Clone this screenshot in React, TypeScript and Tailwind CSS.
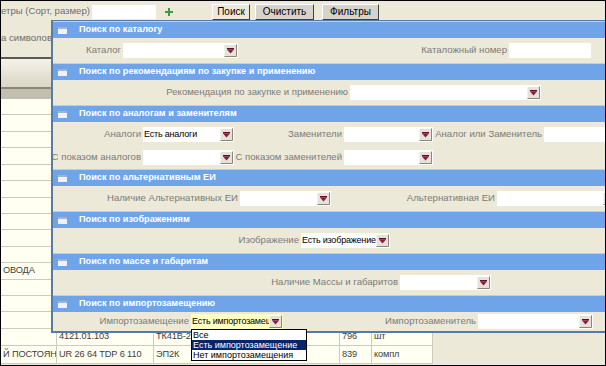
import type { ReactNode } from "react";

const FONT = "font-['Liberation_Sans',Arial,sans-serif]";

function Arrow() {
  return (
    <svg width="13" height="13" viewBox="0 0 13 13" className="shrink-0">
      <rect x="0" y="0" width="13" height="13" fill="#e6e2d8" />
      <path d="M0 12.5V0.5H12.5" stroke="#ffffff" fill="none" />
      <path d="M0.5 12.5H12.5V0.5" stroke="#8a8780" fill="none" />
      <rect x="3" y="4" width="7" height="1.5" fill="#5a1030" />
      <path d="M3 5.5H10L6.5 9.5Z" fill="#8a1c44" />
    </svg>
  );
}

function Select({ w, value, yellow }: { w: string; value?: string; yellow?: boolean }) {
  return (
    <div
      className={`${w} h-[15px] flex items-center shrink-0 pr-[1px] ${
        yellow ? "bg-[#ffffc4] font-medium" : "bg-white"
      }`}
    >
      <span className="flex-1 overflow-hidden whitespace-nowrap pl-[1px] text-[9px] tracking-[-0.2px] text-black leading-none">
        {value}
      </span>
      <Arrow />
    </div>
  );
}

function Input({ w }: { w: string }) {
  return <div className={`${w} h-[15px] bg-white shrink-0`} />;
}

function Label({ w, children }: { w: string; children: ReactNode }) {
  return (
    <div className={`${w} shrink-0 flex justify-end pr-[2px] whitespace-nowrap text-[#7b7b7b] text-[9.6px]`}>
      {children}
    </div>
  );
}

function Head({ title }: { title: string }) {
  return (
    <div className="h-[17px] bg-[#6fa5e8] border-t border-[#b4d0f2] flex items-center">
      <div className="ml-[5px] w-[9px] h-[7px] bg-[#eef2f8] border-t-2 border-[#9fb4d0]" />
      <span className="ml-[12px] text-white font-bold text-[9.2px] whitespace-nowrap">{title}</span>
    </div>
  );
}

const cols = ["w-[56px]", "w-[97px]", "w-[186px]", "w-[32px]", "w-[61px]"];

function Row({ h, cells }: { h: string; cells: string[] }) {
  return (
    <div className={`flex ${h}`}>
      {cols.map((c, i) => (
        <div
          key={i}
          className={`${c} border-r border-b border-[#cdcbbd] bg-[#fffff2] overflow-hidden whitespace-nowrap flex items-center px-[2px] text-[#3d3d3d] text-[9.2px] tracking-[-0.1px]`}
        >
          {cells[i] ?? ""}
        </div>
      ))}
    </div>
  );
}

export default function App() {
  const hidden = Array.from({ length: 14 }, (_, i) => (i === 10 ? ["ОВОДА"] : []));

  return (
    <div className={`relative w-[606px] h-[366px] overflow-hidden bg-[#ECE9D8] border border-black text-[9.6px] ${FONT}`}>
      {/* top bar */}
      <div className="h-[21px] flex items-center">
        <span className="w-[89px] shrink-0 text-[#6e6e6e] whitespace-nowrap overflow-hidden">етры (Сорт, размер)</span>
        <div className="ml-[2px] w-[64px] h-[14px] bg-white" />
        <svg width="10" height="10" viewBox="0 0 10 10" className="ml-[8px]">
          <path d="M5 1V9M1 5H9" stroke="#3c9a3c" strokeWidth="2" />
        </svg>
        <button className="ml-[38px] h-[16px] w-[38px] bg-[#ECE9D8] border border-t-white border-l-white border-r-[#404040] border-b-[#404040] text-black text-[10px] leading-none">
          Поиск
        </button>
        <button className="ml-[5px] h-[16px] w-[59px] bg-[#d6d3cb] border border-t-white border-l-white border-r-[#404040] border-b-[#404040] text-black text-[10px] leading-none">
          Очистить
        </button>
        <button className="ml-[8px] h-[16px] w-[57px] bg-[#d6d3cb] border border-t-white border-l-white border-r-[#404040] border-b-[#404040] text-black text-[10px] leading-none">
          Фильтры
        </button>
      </div>

      {/* page behind */}
      <div className="h-[37px] border-b-2 border-[#5a5a55] flex items-center">
        <span className="text-[#6e6e6e] whitespace-nowrap pb-[3px]">а символов</span>
      </div>
      <div className="h-[28px] bg-gradient-to-b from-[#f5f3ea] to-[#d9d6c4]" />
      <div className="h-[2px] bg-[#8a877b]" />
      <div className="h-[10px] bg-[#c2bfb0]" />
      {hidden.map((cells, i) => (
        <Row key={i} h="h-[16.43px]" cells={cells} />
      ))}
      <Row h="h-[17px]" cells={["", "4121.01.103", "ТК41В-2", "796", "шт"]} />
      <Row h="h-[18px]" cells={["Й ПОСТОЯННОГО", "UR 26 64 TDP 6 110", "ЭП2К", "839", "компл"]} />

      {/* filters panel */}
      <div className="absolute left-[50px] top-[19px] w-[570px] border-l-2 border-b-2 border-t border-[#587ba4] bg-[#ECE9D8]">
        <Head title="Поиск по каталогу" />
        <div className="h-[25px] flex items-center">
          <Label w="w-[70px]">Каталог</Label>
          <Select w="w-[115px]" />
          <Label w="w-[271px]">Каталожный номер</Label>
          <Input w="w-[82px]" />
        </div>

        <Head title="Поиск по рекомендациям по закупке и применению" />
        <div className="h-[25px] flex items-center">
          <Label w="w-[297px]">Рекомендация по закупке и применению</Label>
          <Select w="w-[191px]" />
        </div>

        <Head title="Поиск по аналогам и заменителям" />
        <div className="h-[24px] flex items-center">
          <Label w="w-[90px]">Аналоги</Label>
          <Select w="w-[91px]" value="Есть аналоги" />
          <Label w="w-[110px]">Заменители</Label>
          <Select w="w-[89px]" />
          <Label w="w-[111px]">Аналог или Заменитель</Label>
          <Input w="w-[80px]" />
        </div>
        <div className="h-[23px] flex items-center">
          <Label w="w-[90px]">С показом аналогов</Label>
          <Select w="w-[91px]" />
          <Label w="w-[110px]">С показом заменителей</Label>
          <Select w="w-[89px]" />
        </div>

        <Head title="Поиск по альтернативным ЕИ" />
        <div className="h-[25px] flex items-center">
          <Label w="w-[187px]">Наличие Альтернативных ЕИ</Label>
          <Select w="w-[91px]" />
          <Label w="w-[166px]">Альтернативная ЕИ</Label>
          <Select w="w-[120px]" />
        </div>

        <Head title="Поиск по изображениям" />
        <div className="h-[25px] flex items-center">
          <Label w="w-[248px]">Изображение</Label>
          <Select w="w-[89px]" value="Есть изображение" />
        </div>

        <Head title="Поиск по массе и габаритам" />
        <div className="h-[25px] flex items-center">
          <Label w="w-[347px]">Наличие Массы и габаритов</Label>
          <Select w="w-[91px]" />
        </div>

        <Head title="Поиск по импортозамещению" />
        <div className="h-[19px] flex items-center">
          <Label w="w-[138px]">Импортозамещение</Label>
          <Select w="w-[92px]" value="Есть импортозамещение" yellow />
          <Label w="w-[195px]">Импортозаменитель</Label>
          <Select w="w-[115px]" />
        </div>
      </div>

      {/* open dropdown list */}
      <div className="absolute left-[190px] top-[328px] w-[116px] bg-white border border-black text-[9px] leading-[10px] text-black whitespace-nowrap overflow-hidden">
        <div className="h-[10px] px-[1px]">Все</div>
        <div className="h-[10px] px-[1px] bg-[#0a246a] text-white">Есть импортозамещение</div>
        <div className="h-[10px] px-[1px]">Нет импортозамещения</div>
      </div>
    </div>
  );
}
